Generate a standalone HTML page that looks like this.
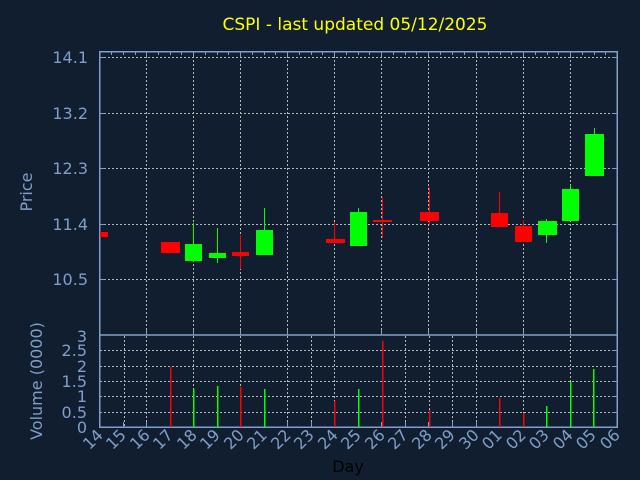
<!DOCTYPE html><html><head><style>
html,body{margin:0;padding:0;background:#111e2f;}
svg{display:block;font-family:"DejaVu Sans","Liberation Sans",sans-serif;}
</style></head><body>
<svg width="640" height="480" viewBox="0 0 640 480">
<rect width="640" height="480" fill="#111e2f"/>
<text x="355" y="30" fill="#ffff00" font-size="17" text-anchor="middle">CSPI - last updated 05/12/2025</text>
<g stroke="#b8b8b8" stroke-width="1" stroke-dasharray="2,2">
<path d="M100 57.5H617M100 113.5H617M100 168.5H617M100 224.5H617M100 279.5H617"/>
<path d="M146.5 52V334M193.5 52V334M240.5 52V334M287.5 52V334M334.5 52V334M381.5 52V334M428.5 52V334M476.5 52V334M523.5 52V334M570.5 52V334"/>
<path d="M100 350.5H617M100 366.5H617M100 381.5H617M100 396.5H617M100 412.5H617"/>
<path d="M124.5 336V427M146.5 336V427M193.5 336V427M240.5 336V427M287.5 336V427M311.5 336V427M334.5 336V427M405.5 336V427M429.5 336V427M452.5 336V427M476.5 336V427M523.5 336V427M570.5 336V427"/>
</g>
<g stroke="#7f9fc9" stroke-width="1.5" fill="none">
<rect x="99.75" y="51.75" width="517.5" height="375.5"/>
<path d="M100 335H617"/>
</g>
<g stroke="#7f9fc9" stroke-width="1">
<path d="M111.5 52v3M123.5 52v3M135.5 52v3M146.5 52v5M158.5 52v3M170.5 52v3M181.5 52v3M193.5 52v5M205.5 52v3M217.5 52v3M228.5 52v3M240.5 52v5M252.5 52v3M264.5 52v3M275.5 52v3M287.5 52v5M299.5 52v3M311.5 52v3M322.5 52v3M334.5 52v5M346.5 52v3M358.5 52v3M369.5 52v3M381.5 52v5M393.5 52v3M405.5 52v3M416.5 52v3M428.5 52v5M440.5 52v3M452.5 52v3M464.5 52v3M476.5 52v5M488.5 52v3M500.5 52v3M511.5 52v3M523.5 52v5M535.5 52v3M547.5 52v3M558.5 52v3M570.5 52v5M582.5 52v3M594.5 52v3M605.5 52v3"/>
<path d="M100 57.5h5M100 113.5h5M100 168.5h5M100 224.5h5M100 279.5h5M612 57.5h5M612 113.5h5M612 168.5h5M612 224.5h5M612 279.5h5"/>
<path d="M146.5 335v-5M193.5 335v-5M240.5 335v-5M287.5 335v-5M334.5 335v-5M381.5 335v-5M428.5 335v-5M476.5 335v-5M523.5 335v-5M570.5 335v-5"/>
<path d="M123.5 427v-5M146.5 427v-5M170.5 427v-5M193.5 427v-5M217.5 427v-5M240.5 427v-5M264.5 427v-5M287.5 427v-5M311.5 427v-5M334.5 427v-5M358.5 427v-5M381.5 427v-5M405.5 427v-5M428.5 427v-5M452.5 427v-5M476.5 427v-5M499.5 427v-5M523.5 427v-5M546.5 427v-5M570.5 427v-5M593.5 427v-5"/>
<path d="M612 350.5h5M612 366.5h5M612 381.5h5M612 396.5h5M612 412.5h5"/>
</g>
<g fill="#7f9fc9" font-size="16" text-anchor="end">
<text x="88" y="63">14.1</text><text x="88" y="119">13.2</text><text x="88" y="174">12.3</text><text x="88" y="230">11.4</text><text x="88" y="285">10.5</text>
<text x="87" y="342">3</text><text x="87" y="356">2.5</text><text x="87" y="372">2</text><text x="87" y="387">1.5</text><text x="87" y="402">1</text><text x="87" y="418">0.5</text><text x="87" y="433">0</text>
</g>
<text transform="translate(32,192) rotate(-90)" fill="#7f9fc9" font-size="16" text-anchor="middle">Price</text>
<text transform="translate(42,381) rotate(-90)" fill="#7f9fc9" font-size="16" text-anchor="middle">Volume (0000)</text>
<g fill="#7f9fc9" font-size="16">
<text transform="translate(104,436) rotate(-45)" text-anchor="end">14</text>
<text transform="translate(127,436) rotate(-45)" text-anchor="end">15</text>
<text transform="translate(151,436) rotate(-45)" text-anchor="end">16</text>
<text transform="translate(174,436) rotate(-45)" text-anchor="end">17</text>
<text transform="translate(198,436) rotate(-45)" text-anchor="end">18</text>
<text transform="translate(221,436) rotate(-45)" text-anchor="end">19</text>
<text transform="translate(245,436) rotate(-45)" text-anchor="end">20</text>
<text transform="translate(268,436) rotate(-45)" text-anchor="end">21</text>
<text transform="translate(292,436) rotate(-45)" text-anchor="end">22</text>
<text transform="translate(315,436) rotate(-45)" text-anchor="end">23</text>
<text transform="translate(339,436) rotate(-45)" text-anchor="end">24</text>
<text transform="translate(362,436) rotate(-45)" text-anchor="end">25</text>
<text transform="translate(386,436) rotate(-45)" text-anchor="end">26</text>
<text transform="translate(409,436) rotate(-45)" text-anchor="end">27</text>
<text transform="translate(433,436) rotate(-45)" text-anchor="end">28</text>
<text transform="translate(456,436) rotate(-45)" text-anchor="end">29</text>
<text transform="translate(480,436) rotate(-45)" text-anchor="end">30</text>
<text transform="translate(503,436) rotate(-45)" text-anchor="end">01</text>
<text transform="translate(527,436) rotate(-45)" text-anchor="end">02</text>
<text transform="translate(550,436) rotate(-45)" text-anchor="end">03</text>
<text transform="translate(574,436) rotate(-45)" text-anchor="end">04</text>
<text transform="translate(597,436) rotate(-45)" text-anchor="end">05</text>
<text transform="translate(621,436) rotate(-45)" text-anchor="end">06</text>
</g>
<text x="348" y="472" fill="#000" font-size="16" text-anchor="middle">Day</text>
<g stroke-width="1">
<path stroke="#00ff00" d="M193.5 223V262M217.5 228V263M264.5 208V255M358.5 208V246M546.5 219V243M570.5 185V221M594.5 128V176"/>
<path stroke="#ff0000" d="M240.5 235V269M334.5 222V243M382.5 197V238M429.5 187V225M499.5 192V227M523.5 220V242"/>
</g>
<g fill="#ff0000">
<rect x="100" y="232" width="8" height="5"/>
<rect x="161" y="242" width="19" height="11"/>
<rect x="232" y="252" width="17" height="4"/>
<rect x="326" y="239" width="19" height="4"/>
<rect x="373" y="220" width="19" height="2"/>
<rect x="420" y="212" width="19" height="9"/>
<rect x="491" y="213" width="17" height="14"/>
<rect x="515" y="226" width="17" height="16"/>
</g>
<g fill="#00ff00">
<rect x="185" y="244" width="17" height="17"/>
<rect x="209" y="253" width="17" height="5"/>
<rect x="256" y="230" width="17" height="25"/>
<rect x="350" y="212" width="17" height="34"/>
<rect x="538" y="221" width="19" height="14"/>
<rect x="562" y="189" width="17" height="32"/>
<rect x="585" y="134" width="19" height="42"/>
</g>
<g fill="#ff0000">
<rect x="170" y="367" width="1.5" height="60"/>
<rect x="240" y="387" width="1.5" height="40"/>
<rect x="334" y="401" width="1.5" height="26"/>
<rect x="382" y="341" width="1.5" height="86"/>
<rect x="429" y="410" width="1.5" height="17"/>
<rect x="499" y="398" width="1.5" height="29"/>
<rect x="523" y="413" width="1.5" height="14"/>
</g>
<g fill="#00ff00">
<rect x="193" y="389" width="1.5" height="38"/>
<rect x="217" y="386" width="1.5" height="41"/>
<rect x="264" y="389" width="1.5" height="38"/>
<rect x="358" y="389" width="1.5" height="38"/>
<rect x="546" y="406" width="1.5" height="21"/>
<rect x="570" y="382" width="1.5" height="45"/>
<rect x="593" y="369" width="1.5" height="58"/>
</g>
</svg>
</body></html>
